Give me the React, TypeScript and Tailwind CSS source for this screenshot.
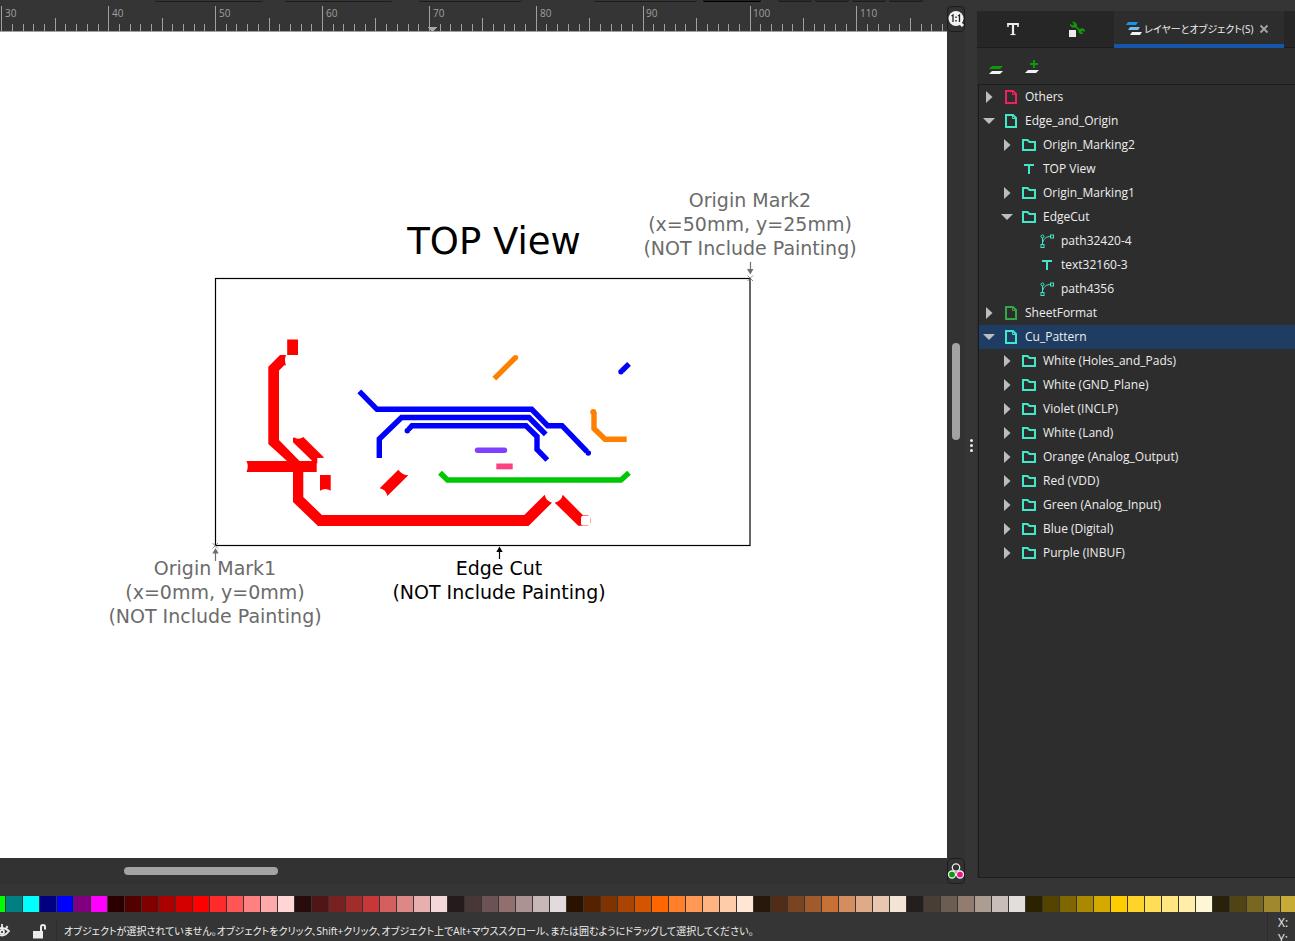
import { useState } from "react";
import type { ReactNode } from "react";
import clsx from "clsx";

type NodeKind = "layer" | "group" | "text" | "path";

interface TreeNode {
  label: string;
  kind: NodeKind;
  level: 0 | 1 | 2;
  color: string;
  state?: "open" | "closed";
}

const TEAL = "text-[#40e8c8]";

const nodes: TreeNode[] = [
  { label: "Others", kind: "layer", level: 0, color: "text-[#f0205a]", state: "closed" },
  { label: "Edge_and_Origin", kind: "layer", level: 0, color: TEAL, state: "open" },
  { label: "Origin_Marking2", kind: "group", level: 1, color: TEAL, state: "closed" },
  { label: "TOP View", kind: "text", level: 1, color: TEAL },
  { label: "Origin_Marking1", kind: "group", level: 1, color: TEAL, state: "closed" },
  { label: "EdgeCut", kind: "group", level: 1, color: TEAL, state: "open" },
  { label: "path32420-4", kind: "path", level: 2, color: TEAL },
  { label: "text32160-3", kind: "text", level: 2, color: TEAL },
  { label: "path4356", kind: "path", level: 2, color: TEAL },
  { label: "SheetFormat", kind: "layer", level: 0, color: "text-[#34a848]", state: "closed" },
  { label: "Cu_Pattern", kind: "layer", level: 0, color: TEAL, state: "open" },
  { label: "White (Holes_and_Pads)", kind: "group", level: 1, color: TEAL, state: "closed" },
  { label: "White (GND_Plane)", kind: "group", level: 1, color: TEAL, state: "closed" },
  { label: "Violet (INCLP)", kind: "group", level: 1, color: TEAL, state: "closed" },
  { label: "White (Land)", kind: "group", level: 1, color: TEAL, state: "closed" },
  { label: "Orange (Analog_Output)", kind: "group", level: 1, color: TEAL, state: "closed" },
  { label: "Red (VDD)", kind: "group", level: 1, color: TEAL, state: "closed" },
  { label: "Green (Analog_Input)", kind: "group", level: 1, color: TEAL, state: "closed" },
  { label: "Blue (Digital)", kind: "group", level: 1, color: TEAL, state: "closed" },
  { label: "Purple (INBUF)", kind: "group", level: 1, color: TEAL, state: "closed" },
];

const swatches = [
  "bg-[#00ff00]", "bg-[#008080]", "bg-[#00ffff]", "bg-[#000080]", "bg-[#0000ff]", "bg-[#800080]", "bg-[#ff00ff]",
  "bg-[#2b0000]", "bg-[#550000]", "bg-[#800000]", "bg-[#aa0000]", "bg-[#d40000]", "bg-[#ff0000]", "bg-[#ff2a2a]",
  "bg-[#ff5555]", "bg-[#ff8080]", "bg-[#ffaaaa]", "bg-[#ffd5d5]",
  "bg-[#280b0b]", "bg-[#501616]", "bg-[#782121]", "bg-[#a02c2c]", "bg-[#c83737]", "bg-[#d35f5f]", "bg-[#de8787]",
  "bg-[#e9afaf]", "bg-[#f4d7d7]",
  "bg-[#241c1c]", "bg-[#483737]", "bg-[#6c5353]", "bg-[#916f6f]", "bg-[#ac9393]", "bg-[#c8b7b7]", "bg-[#e3dbdb]",
  "bg-[#2b1100]", "bg-[#552200]", "bg-[#803300]", "bg-[#aa4400]", "bg-[#d45500]", "bg-[#ff6600]", "bg-[#ff7f2a]",
  "bg-[#ff9955]", "bg-[#ffb380]", "bg-[#ffccaa]", "bg-[#ffe6d5]",
  "bg-[#28170b]", "bg-[#502d16]", "bg-[#784421]", "bg-[#a05a2c]", "bg-[#c87137]", "bg-[#d38d5f]", "bg-[#deaa87]",
  "bg-[#e9c6af]", "bg-[#f4e3d7]",
  "bg-[#241f1c]", "bg-[#483e37]", "bg-[#6c5d53]", "bg-[#917c6f]", "bg-[#ac9d93]", "bg-[#c8beb7]", "bg-[#e3dedb]",
  "bg-[#2b2200]", "bg-[#554400]", "bg-[#806600]", "bg-[#aa8800]", "bg-[#d4aa00]", "bg-[#ffcc00]", "bg-[#ffd42a]",
  "bg-[#ffdd55]", "bg-[#ffe680]", "bg-[#ffeeaa]", "bg-[#fff6d5]",
  "bg-[#28220b]", "bg-[#504416]", "bg-[#786721]", "bg-[#a0892c]", "bg-[#c8ab37]",
];

const indents = ["pl-[2px]", "pl-[20px]", "pl-[38px]"];

const NodeIcon = ({ kind }: { kind: NodeKind }) => (
  <svg className="size-4 shrink-0" viewBox="0 0 16 16" fill="none" stroke="currentColor" aria-hidden="true">
    {kind === "layer" && (
      <>
        <path d="M3 2H10L13 5V14H3Z" strokeWidth="2" />
        <path d="M9.5 2V5.5H13" strokeWidth="1" />
      </>
    )}
    {kind === "group" && <path d="M2 3H6.5L8.5 5H14V13H2Z" strokeWidth="2" />}
    {kind === "text" && <path d="M3 4H13M8 4V13" strokeWidth="2" />}
    {kind === "path" && (
      <>
        <path d="M3.5 5V11.5M4 9C5 5 8 3.5 11.5 3.5" strokeWidth="1" />
        <circle cx="3.5" cy="3.5" r="1.5" />
        <rect x="11.5" y="2" width="3" height="3" />
        <rect x="2" y="11.5" width="3" height="3" />
      </>
    )}
  </svg>
);

const Arrow = ({ state }: { state?: "open" | "closed" }) => (
  <svg className="size-4 shrink-0" viewBox="0 0 16 16" fill="#bdbdbd" aria-hidden="true">
    {state === "closed" && <path d="M5 2L11.5 8L5 14Z" />}
    {state === "open" && <path d="M2 5H14L8 11Z" />}
  </svg>
);

const Ruler = () => {
  const ticks = Array.from({ length: 89 }, (_, i) => i);
  return (
    <svg className="block h-[26px] w-full border-b border-[#a0a0a0]" shapeRendering="crispEdges">
      {ticks.map((i) => {
        const x = Math.round(1.3 + i * 10.69);
        const top = i % 10 === 0 ? 0 : i % 5 === 0 ? 12 : 18;
        return <path key={i} d={`M${x + 0.5} ${top}V26`} stroke="#a0a0a0" />;
      })}
      {ticks
        .filter((i) => i % 10 === 0)
        .map((i) => (
          <text key={i} x={Math.round(5 + i * 10.69)} y="11" className="fill-[#a0a0a0] text-[10px]">
            {30 + i}
          </text>
        ))}
      <path d="M427 21H437L432 26Z" fill="#a8a8a8" />
    </svg>
  );
};

const Note = ({ x, y, lines, className }: { x: number; y: number; lines: string[]; className: string }) => (
  <text textAnchor="middle" className={clsx("text-[19px]", className)}>
    {lines.map((line, i) => (
      <tspan key={line} x={x} y={y + i * 24}>
        {line}
      </tspan>
    ))}
  </text>
);

const Drawing = () => (
  <svg className="block h-full w-full" role="img" aria-label="TOP View">
    <g transform="translate(0 -32)" fill="none">
      <rect x="215.5" y="278.5" width="534.5" height="267" stroke="#000" strokeWidth="1.2" />

      {/* VDD */}
      <g fill="#f00">
        <rect x="287.2" y="339.5" width="10.8" height="15.5" />
        <path d="M280 355H286Q284 360 286 365.3H284.3L279 370.5V440L299.5 461H316.7V472H303.3V497L322 515H524.3L544.7 494.7Q546 501 552 502.7L528.5 526H318L293 502V472H246.5Q249 466.5 246.5 461H287L268.3 444V366.7Z" />
        <path d="M293 438.3L294 437.3Q299 440.5 303.3 437L324.3 457.7L317.3 458V463.3H312.3V461L293 442.3Z" />
        <path d="M320 475H330.7V490.7Q325.3 487.5 320 490.7Z" />
        <path d="M379.7 488.3L398.3 469.7Q402 475 408.3 475.3L387.3 496Q386 489.5 379.7 488.3Z" />
        <path d="M554.7 502.7Q561.5 501 562.7 494.7L583 515.3H588Q591 517 591 520.5Q591 524 588 525.7H578.3Z" />
      </g>
      <rect x="581" y="515.8" width="9.6" height="9.6" rx="2" fill="#fff" />

      {/* digital */}
      <g stroke="#00f" strokeWidth="5.4">
        <path d="M359.3 391.3L377 409.3H531.7L547.7 425.7H562L587 451.7" />
        <path d="M379.3 458V439L401.5 417.5H529L545.7 434.3" />
        <path d="M408.5 429.5L412 425.7H526L537 436.5V449.3L547.3 460" />
        <path d="M622 370.7L629 363.9" />
      </g>
      <g fill="#00f">
        <circle cx="588.3" cy="453" r="2.7" />
        <circle cx="407.3" cy="430.8" r="2.7" />
        <circle cx="621" cy="371.7" r="2.7" />
      </g>

      {/* analog output */}
      <g stroke="#ff8000" strokeWidth="5.4">
        <path d="M494.3 378.7L515 358" />
        <path d="M594 412V428.5L605 439.2H626.7" />
      </g>
      <circle cx="515.5" cy="357.6" r="2.7" fill="#ff8000" />
      <circle cx="593.3" cy="412" r="3" fill="#ff8000" />

      <path d="M477.5 450.2H504.5" stroke="#8040ff" strokeWidth="5.4" strokeLinecap="round" />
      <path d="M496.3 466.4H512.7" stroke="#ff4080" strokeWidth="5.8" />
      <path d="M440 472.8L447.5 480H621L629 472.7" stroke="#00c800" strokeWidth="5.4" />

      {/* origin marks */}
      <g stroke="#707070">
        <path d="M750.5 262V270M215.5 552V561" strokeWidth="1.2" />
        <path
          d="M747.5 275.5L753 281M753 275.5L747.5 281M212.5 543L218 548.5M218 543L212.5 548.5"
          strokeWidth="0.8"
        />
      </g>
      <path d="M747 269H753.5L750.3 274.5ZM212.3 553.5H218.7L215.5 548Z" fill="#707070" />
      <path d="M499.5 550V559" stroke="#000" strokeWidth="1.2" />
      <path d="M496.3 552H502.7L499.5 546.5Z" fill="#000" />

      <text x="494" y="254" textAnchor="middle" className="fill-black text-[37px]">
        TOP View
      </text>
      <Note
        x={750}
        y={207}
        className="fill-[#6b6b6b]"
        lines={["Origin Mark2", "(x=50mm, y=25mm)", "(NOT Include Painting)"]}
      />
      <Note
        x={215}
        y={575}
        className="fill-[#6b6b6b]"
        lines={["Origin Mark1", "(x=0mm, y=0mm)", "(NOT Include Painting)"]}
      />
      <Note x={499} y={575} className="fill-black" lines={["Edge Cut", "(NOT Include Painting)"]} />
    </g>
  </svg>
);

const SquareButton = ({ label, children }: { label: string; children: ReactNode }) => (
  <button
    type="button"
    aria-label={label}
    className="flex h-[26px] w-[18px] shrink-0 items-center justify-center rounded-[5px] border border-[#1c1c1c] bg-[#323232]"
  >
    {children}
  </button>
);

// lower edges of the tool controls cut by the window's top
const ToolbarEdge = () => (
  <div className="flex h-[6px] shrink-0 items-start pl-[155px]">
    <div className="mr-[22px] h-[2px] w-[108px] rounded-b-sm border-b border-[#1c1c1c]" />
    <div className="mr-[27px] h-[2px] w-[107px] rounded-b-sm border-b border-[#1c1c1c]" />
    <div className="mr-[72px] h-[2px] w-[103px] rounded-b-sm border-b border-[#1c1c1c]" />
    <div className="mr-[6px] h-[2px] w-[103px] rounded-b-sm border-b border-[#1c1c1c]" />
    <div className="mr-[17px] h-[2px] w-[58px] rounded-b-sm border-b border-black bg-[#222]" />
    <div className="flex gap-[3px]">
      <div className="h-[2px] w-[34px] rounded-b-sm border-b border-[#1c1c1c] bg-[#2a2a2a]" />
      <div className="h-[2px] w-[34px] rounded-b-sm border-b border-[#1c1c1c] bg-[#2a2a2a]" />
      <div className="h-[2px] w-[34px] rounded-b-sm border-b border-[#1c1c1c] bg-[#2a2a2a]" />
      <div className="h-[2px] w-[34px] rounded-b-sm border-b border-[#1c1c1c] bg-[#2a2a2a]" />
    </div>
  </div>
);

const LayersPanel = () => {
  const [selected, setSelected] = useState("Cu_Pattern");

  return (
    <aside className="mt-[5px] mb-[6px] flex w-[318px] shrink-0 flex-col bg-[#2d2d2d]">
      <div className="flex h-[37px] shrink-0 border-b border-[#1c1c1c] bg-[#262626]" role="tablist">
        <button type="button" role="tab" aria-label="Text" className="flex w-[72px] items-center justify-center">
          <svg className="size-4" viewBox="0 0 16 16" fill="none" stroke="#ececec">
            <path d="M3 6V3H13V6" strokeWidth="1.6" />
            <path d="M2.2 3H13.800M8 3V13" strokeWidth="2.2" />
            <path d="M5.5 13.500H10.5" strokeWidth="1.2" />
          </svg>
        </button>
        <button
          type="button"
          role="tab"
          aria-label="Object properties"
          className="flex w-14 items-center justify-center"
        >
          <svg className="size-4" viewBox="0 0 16 16">
            <rect x="0" y="9" width="7" height="7" fill="#ececec" />
            <path
              d="M3 0.500L6 1L8 3.500L7.800 5.500L10.500 8L13.500 7L16 9V11L13.500 9.800L12.500 10.800L14.500 12.800L12 13.300L9.500 11.500L9.300 9L6.500 6.500L3.500 6.800L1 4.800L1.300 2.800L3.500 4.500L5 3.300Z"
              fill="#0a9a0a"
            />
          </svg>
        </button>
        <div className="flex-1" />
        <div className="flex h-[37px] w-[170px] items-center border-b-4 border-[#1656a8] bg-[#2d2d2d] pt-[2px] pl-3">
          <button
            type="button"
            role="tab"
            aria-selected="true"
            className="flex items-center gap-0.5 text-[10px] whitespace-nowrap"
          >
            <svg className="size-4" viewBox="0 0 16 16">
              <path d="M2 1H12L10 4H0Z" fill="#1a94e0" />
              <path d="M4 6H14L12 9H2Z" fill="#74bdec" />
              <path d="M6 11H16L14 14H4Z" fill="#f2f2f2" />
            </svg>
            レイヤーとオブジェクト(S)
          </button>
          <button type="button" aria-label="Close" className="mr-[15px] ml-auto">
            <svg className="size-[10px]" viewBox="0 0 10 10" stroke="#a0a0a0" strokeWidth="2">
              <path d="M1.500 1.500L8.500 8.500M8.500 1.500L1.500 8.500" />
            </svg>
          </button>
        </div>
        <div className="w-[11px]" />
      </div>

      <div className="flex h-9 shrink-0 items-center gap-[21px] pl-[11px]">
        <button type="button" aria-label="Layers">
          <svg className="size-4" viewBox="0 0 16 16">
            <path d="M4 8H15L12 11H1Z" fill="#0a9a0a" />
            <path d="M4 13H15L12 16H1Z" fill="#f2f2f2" />
          </svg>
        </button>
        <button type="button" aria-label="Add layer">
          <svg className="size-4" viewBox="0 0 16 16">
            <path d="M8 2H10V5H13V7H10V10H8V7H5V5H8Z" fill="#0a9a0a" />
            <path d="M3 12H14L11 15H0Z" fill="#f2f2f2" />
          </svg>
        </button>
      </div>

      <ul className="ml-px flex-1 border-t border-b border-l border-[#1c1c1c]" role="tree">
        {nodes.map((node) => (
          <li key={node.label} role="none">
            <button
              type="button"
              role="treeitem"
              aria-level={node.level + 1}
              aria-selected={selected === node.label}
              onClick={() => setSelected(node.label)}
              className={clsx(
                "flex h-6 w-full items-center gap-[6px] text-left whitespace-nowrap",
                indents[node.level],
                selected === node.label && "bg-[#1f3d63]",
              )}
            >
              <Arrow state={node.state} />
              <span className={node.color}>
                <NodeIcon kind={node.kind} />
              </span>
              {node.label}
            </button>
          </li>
        ))}
      </ul>
    </aside>
  );
};

const StatusBar = () => (
  <footer className="flex h-[29px] shrink-0 items-start overflow-hidden">
    <div className="flex h-[37px] flex-1 items-center whitespace-nowrap">
      <button type="button" aria-label="Layer visibility" className="w-[10px] overflow-hidden">
        <svg className="-ml-[6px] h-4 w-4" viewBox="0 0 16 16" fill="none" stroke="#ececec">
          <path d="M1 8Q8 2 15 8Q8 17 1 8" strokeWidth="1.800" />
          <path d="M8 1V5M13.500 3L12 6" strokeWidth="1.800" />
          <circle cx="8" cy="9" r="2" strokeWidth="1.800" />
        </svg>
      </button>
      <button type="button" aria-label="Lock layer" className="ml-[22px]">
        <svg className="size-4" viewBox="0 0 16 16">
          <rect x="1" y="8" width="10" height="7.500" fill="#ececec" />
          <path d="M9 8V4Q9 2 11 2Q13 2 13 4V6.500" fill="none" stroke="#ececec" strokeWidth="2" />
        </svg>
      </button>
      <p className="ml-2 flex h-6 items-center border-l border-[#2c2c2c] pl-[7px] text-[10px]">
        オブジェクトが選択されていません。オブジェクトをクリック、Shift+クリック、オブジェクト上でAlt+マウススクロール、または囲むようにドラッグして選択してください。
      </p>
    </div>
    <div className="h-full w-[28px] border-l border-[#2c2c2c] pt-[3px] pl-[10px] leading-4">
      <div>X:</div>
      <div>Y:</div>
    </div>
  </footer>
);

export default function App() {
  return (
    <div className="flex h-screen flex-col overflow-hidden bg-[#353535] font-['Open_Sans','Noto_Sans_CJK_JP',sans-serif] text-[12px] leading-4 text-[#eeeeee] [font-feature-settings:'palt']">
      <div className="flex min-h-0 flex-1">
        <div className="flex min-w-0 flex-1 flex-col">
          <ToolbarEdge />
          <div className="flex min-h-0 flex-1">
            <div className="flex min-w-0 flex-1 flex-col">
              <Ruler />
              <main className="min-h-0 flex-1 overflow-hidden bg-white font-['DejaVu_Sans',sans-serif]">
                <Drawing />
              </main>
              <div className="flex h-[26px] shrink-0 items-center bg-[#323232] pl-[124px]">
                <div className="h-2 w-[154px] rounded-full bg-[#a3a3a1]" />
              </div>
            </div>
            <div className="flex w-[18px] shrink-0 flex-col bg-[#323232]">
              <SquareButton label="1:1">
                <svg className="size-[18px] shrink-0" viewBox="0 0 18 18">
                  <path d="M13 13L16 16" stroke="#f2f2f2" strokeWidth="3" />
                  <circle cx="9" cy="8.500" r="7.500" fill="#f2f2f2" />
                  <path d="M4.500 6L6 5V12M11 6L12.500 5V12" fill="none" stroke="#222" strokeWidth="1.300" />
                  <path d="M8.300 6.500H9.700V8H8.300ZM8.300 10H9.700V11.500H8.300Z" fill="#222" />
                </svg>
              </SquareButton>
              <div className="flex flex-1 justify-center pt-[311px]">
                <div className="h-[97px] w-2 rounded-full bg-[#a3a3a1]" />
              </div>
              <SquareButton label="Color management">
                <svg className="size-[18px] shrink-0" viewBox="0 0 18 18" stroke="#ececec" strokeWidth="1.300">
                  <circle cx="9" cy="5.500" r="3.700" fill="none" />
                  <circle cx="5" cy="12.500" r="3.500" fill="#0a9a0a" />
                  <circle cx="13" cy="12.500" r="3.500" fill="#f0148c" />
                </svg>
              </SquareButton>
            </div>
          </div>
        </div>
        <div className="flex w-3 shrink-0 flex-col items-center justify-center gap-[2px] pt-[6px]">
          <div className="size-[3px] rounded-full bg-[#ececec]" />
          <div className="size-[3px] rounded-full bg-[#ececec]" />
          <div className="size-[3px] rounded-full bg-[#ececec]" />
        </div>
        <div className="flex pt-[6px]">
          <LayersPanel />
        </div>
      </div>

      <div className="mt-3 -ml-[11px] flex h-4 shrink-0 gap-px overflow-hidden">
        {swatches.map((swatch) => (
          <button key={swatch} type="button" aria-label="Swatch" className={clsx("h-4 w-4 shrink-0", swatch)} />
        ))}
      </div>

      <StatusBar />
    </div>
  );
}
